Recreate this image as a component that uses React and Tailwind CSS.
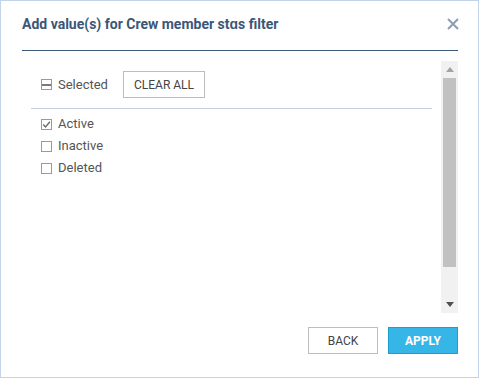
import { useState } from 'react';

const ITEMS = ['Active', 'Inactive', 'Deleted'];

function Box({ state }) {
  // state: 'checked' | 'empty' | 'partial'
  return (
    <span className="relative flex h-[11px] w-[11px] shrink-0 items-center justify-center border border-[#9a9a9a] bg-white">
      {state === 'checked' && (
        <svg width="9" height="9" viewBox="0 0 9 9">
          <path d="M1.2 4.6 L3.5 6.9 L7.9 1.8" fill="none" stroke="#6b6b6b" strokeWidth="1.4" />
        </svg>
      )}
      {state === 'partial' && <span className="h-[2px] w-full bg-[#7a7a7a]" />}
    </span>
  );
}

export default function App() {
  const [selected, setSelected] = useState(['Active']);

  const toggle = (name) => {
    setSelected((s) => (s.includes(name) ? s.filter((x) => x !== name) : [...s, name]));
  };

  return (
    <div
      className="flex h-[378px] w-[479px] flex-col border border-[#c5d3e9] bg-white"
      style={{ fontFamily: 'Roboto, "Liberation Sans", sans-serif' }}
    >
      {/* header */}
      <div className="ml-[21px] mr-[20px] flex h-[50px] items-start justify-between border-b border-[#3e5a7d] pt-[13px]">
        <h1 className="text-[14px] font-bold leading-[20px] text-[#3b5677]">
          Add value(s) for Crew member stɑs filter
        </h1>
        <button className="mr-[-1px] mt-[4px] flex h-[12px] w-[12px] items-center justify-center">
          <svg width="12" height="12" viewBox="0 0 12 12">
            <path d="M1 1 L11 11 M11 1 L1 11" stroke="#8d9cb1" strokeWidth="2" />
          </svg>
        </button>
      </div>

      {/* list + scrollbar */}
      <div className="ml-[21px] mr-[20px] mt-[10px] flex h-[252px]">
        <div className="flex-1">
          <div className="flex h-[37px] items-end pl-[19px]">
            <div className="flex h-[27px] w-[82px] items-center gap-[6px]">
              <Box state="partial" />
              <span className="text-[13px] text-[#555]">Selected</span>
            </div>
            <button
              onClick={() => setSelected([])}
              className="h-[27px] w-[82px] border border-[#bdbdbd] bg-white text-[12px] text-[#444]"
            >
              CLEAR ALL
            </button>
          </div>
          <div className="mx-[9px] mt-[10px] h-px bg-[#c3d0e2]" />
          <div className="mt-[4px] pl-[19px]">
            {ITEMS.map((name) => (
              <label
                key={name}
                onClick={() => toggle(name)}
                className="flex h-[22px] cursor-pointer items-center gap-[6px] text-[13px] text-[#555]"
              >
                <Box state={selected.includes(name) ? 'checked' : 'empty'} />
                <span>{name}</span>
              </label>
            ))}
          </div>
        </div>

        <div className="flex w-[17px] flex-col bg-[#f1f1f1]">
          <div className="flex h-[17px] items-center justify-center">
            <svg width="8" height="5" viewBox="0 0 8 5">
              <path d="M4 0 L8 5 L0 5 Z" fill="#a3a3a3" />
            </svg>
          </div>
          <div className="mx-[2px] h-[189px] bg-[#c1c1c1]" />
          <div className="flex-1" />
          <div className="flex h-[17px] items-center justify-center">
            <svg width="8" height="5" viewBox="0 0 8 5">
              <path d="M0 0 L8 0 L4 5 Z" fill="#505050" />
            </svg>
          </div>
        </div>
      </div>

      {/* footer */}
      <div className="ml-[21px] mr-[20px] mt-[14px] flex justify-end gap-[10px]">
        <button className="h-[27px] w-[70px] border border-[#bdbdbd] bg-white text-[12px] text-[#444]">
          BACK
        </button>
        <button className="h-[27px] w-[70px] border border-[#1b9fd1] bg-[#36b6e6] text-[12px] font-bold text-white">
          APPLY
        </button>
      </div>
    </div>
  );
}
